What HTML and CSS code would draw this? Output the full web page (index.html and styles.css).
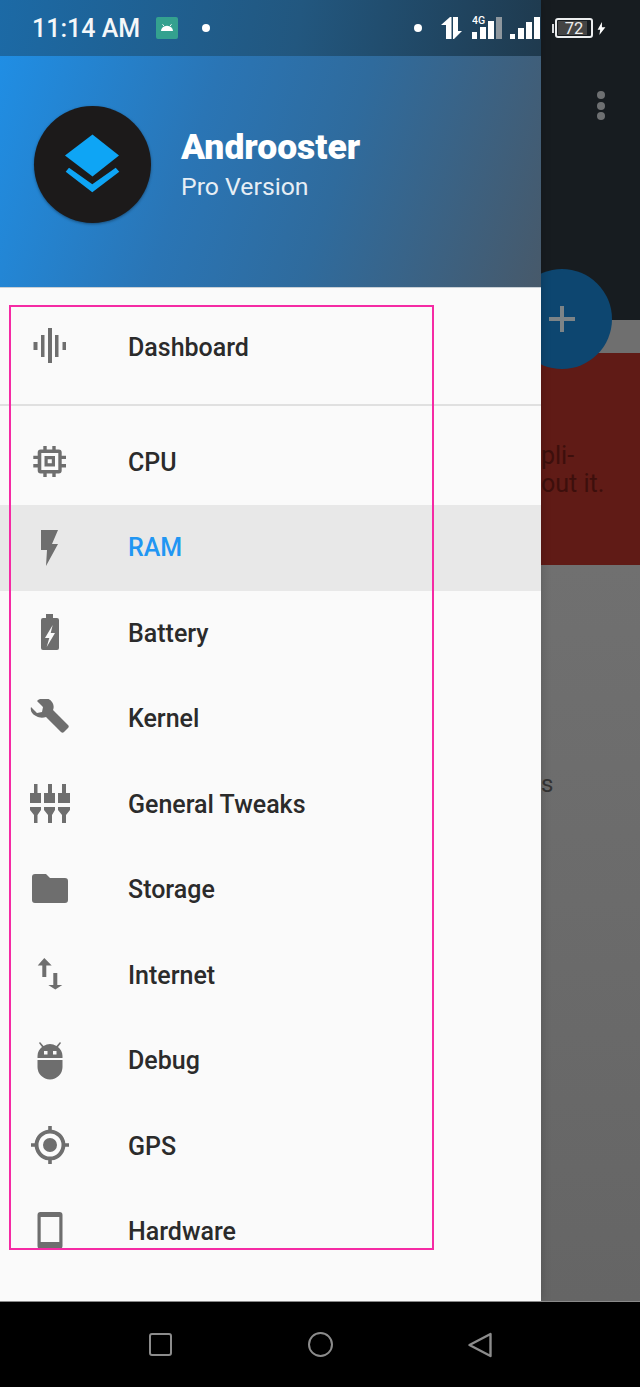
FILE: index.html
```html
<!DOCTYPE html>
<html lang="en">
<head>
  <meta charset="UTF-8">
  <title>Androoster</title>
  <link rel="stylesheet" href="styles.css">
</head>
<body>
  <div class="screen">
    <!-- App behind the drawer, dimmed by the scrim colours. -->
    <div class="backdrop">
      <div class="app-bar">
        <div class="overflow-menu"><span></span><span></span><span></span></div>
      </div>
      <div class="strip"></div>
      <div class="red-card">
        <p class="red-text">pli-<br>out it.</p>
      </div>
      <div class="grey-body">
        <p class="grey-text">s</p>
      </div>
    </div>

    <div class="fab"><span class="fab-plus"></span></div>

    <aside class="drawer">
      <header class="drawer-header">
        <div class="status-left">
          <span class="clock">11:14 AM</span>
          <span class="notif-badge">
            <svg viewBox="0 0 24 24" width="18" height="18"><path d="M4 16a8 7 0 0 1 16 0z" fill="#fff"/><path d="M8 9.500 6 7M16 9.500 18 7" stroke="#fff" stroke-width="1.200"/></svg>
          </span>
          <span class="status-dot"></span>
        </div>
        <div class="brand">
          <div class="logo">
            <svg viewBox="0 0 117 117" width="117" height="117">
              <path d="M58.500 28.500 85 49.500 58.500 70.500 31 49.500z" fill="#0ea5f5"/>
              <path d="M31.700 65.700 35 61.700 58.300 78.300 81.700 61.700 85.300 65.700 58.300 86.300z" fill="#0ea5f5"/>
            </svg>
          </div>
          <div class="brand-text">
            <div class="brand-name">Androoster</div>
            <div class="brand-sub">Pro Version</div>
          </div>
        </div>
      </header>

      <nav class="menu">
        <a class="menu-item menu-item-first">
          <svg class="menu-icon" viewBox="0 0 40 40"><path d="M3.500 15h4v8h-4zM11 8h3.500v22H11zM18 1h4v35h-4zM25 8h3.500v22H25zM32.500 15H36v8h-3.500z"/></svg>
          <span>Dashboard</span>
        </a>
        <div class="menu-divider"></div>
        <a class="menu-item">
          <svg class="menu-icon" viewBox="0 0 40 40"><path fill-rule="evenodd" d="M10.700 7.500h18a3 3 0 0 1 3 3v18a3 3 0 0 1-3 3h-18a3 3 0 0 1-3-3v-18a3 3 0 0 1 3-3zM11.300 11v17h17V11zM14.500 14H25v10.500H14.500zM17.700 17.200v4.100h4.100v-4.100zM13.300 4h3.400v3.500h-3.400zM22.300 4h3.400v3.500h-3.400zM13.300 31.500h3.400V35h-3.400zM22.300 31.500h3.400V35h-3.400zM3.300 13.700h4.400v3.400H3.300zM3.300 22h4.400v3.400H3.300zM31.700 13.700H36v3.400h-4.300zM31.700 22H36v3.400h-4.300z"/></svg>
          <span>CPU</span>
        </a>
        <a class="menu-item menu-item-active">
          <svg class="menu-icon" viewBox="0 0 40 40"><path d="M11 2h17l-6 14h6L16 38l1-16h-6z"/></svg>
          <span>RAM</span>
        </a>
        <a class="menu-item">
          <svg class="menu-icon" viewBox="0 0 40 40"><path fill-rule="evenodd" d="M16 1h7v4h4a2 2 0 0 1 2 2v28a2 2 0 0 1-2 2H13a2 2 0 0 1-2-2V7a2 2 0 0 1 2-2h3zM22.700 12 15 25h4.300l-2.600 9L25 20h-4.300z"/></svg>
          <span>Battery</span>
        </a>
        <a class="menu-item">
          <svg class="menu-icon" viewBox="0 0 40 40"><path d="M1 8 7 14l5-1 1-5-6-6C11-2 19-2 22 3c2 3 2 6 1 8l15 15c1 1 1 2 0 3l-4 4c-1 1-2 1-3 0L16 18c-3 1-7 1-10-1C2 15 0 12 1 8z"/></svg>
          <span>Kernel</span>
        </a>
        <a class="menu-item">
          <svg class="menu-icon" viewBox="0 0 40 40"><path d="M4 0h3.500v9H11v10H0V9h4zM18 0h4v9h3v10H14V9h4zM32 0h4v9h4v10H28V9h4zM0 23h11v3l-3.500 5v8H4v-8l-4-5zM14 23h11v3l-3 5v8h-4v-8l-4-5zM28 23h12v3l-4 5v8h-4v-8l-4-5z"/></svg>
          <span>General Tweaks</span>
        </a>
        <a class="menu-item">
          <svg class="menu-icon" viewBox="0 0 40 40"><path d="M5 4h11l4 4h15a3 3 0 0 1 3 3v19a3 3 0 0 1-3 3H5a3 3 0 0 1-3-3V7a3 3 0 0 1 3-3z"/></svg>
          <span>Storage</span>
        </a>
        <a class="menu-item">
          <svg class="menu-icon" viewBox="0 0 40 40"><path d="M14.300 3 21.700 10.500H16.300V22H12.300V10.500H7.700zM25.300 34.500 18.300 30H23.300V18H27.300V30H32.300z"/></svg>
          <span>Internet</span>
        </a>
        <a class="menu-item">
          <svg class="menu-icon" viewBox="0 0 40 40"><path fill-rule="evenodd" d="M7.500 17v-2c0-4 2-7 4.500-9L9 2l1-1 3.500 4a13 13 0 0 1 13 0L30 1l1 1-3 4c2.500 2 4.500 5 4.500 9v2zM14 10v3.500h3.500V10zM23 10v3.500h3.500V10zM7.500 19h25v7a12.500 12.500 0 0 1-25 0z"/></svg>
          <span>Debug</span>
        </a>
        <a class="menu-item">
          <svg class="menu-icon" viewBox="0 0 40 40"><path fill-rule="evenodd" d="M18.200 0h3.600v3.700A15.500 15.500 0 0 1 35.300 17.200H39v3.600h-3.700A15.500 15.500 0 0 1 21.800 34.300V38h-3.600v-3.700A15.500 15.500 0 0 1 4.700 20.800H1v-3.600h3.700A15.500 15.500 0 0 1 18.200 3.700zM20 7.500a11.500 11.500 0 1 0 0 23 11.500 11.500 0 0 0 0-23zM20 12a7 7 0 1 1 0 14 7 7 0 0 1 0-14z"/></svg>
          <span>GPS</span>
        </a>
        <a class="menu-item">
          <svg class="menu-icon" viewBox="0 0 40 40"><path fill-rule="evenodd" d="M10.500 0h19a3 3 0 0 1 3 3v31a3 3 0 0 1-3 3h-19a3 3 0 0 1-3-3V3a3 3 0 0 1 3-3zM10.700 5v25h18.600V5z"/></svg>
          <span>Hardware</span>
        </a>
      </nav>
      <div class="highlight-box"></div>
    </aside>

    <div class="status-right">
      <span class="status-dot status-dot-right"></span>
      <svg class="icon-arrows" width="21" height="24" viewBox="0 0 21 24"><path d="M9 1h1.500v22H5V9H0zM12 1h5v14h4l-8 8h-1z" fill="#fff"/></svg>
      <svg class="icon-signal" width="30" height="28" viewBox="0 0 30 28"><text x="0" y="10" class="net-type">4G</text><path d="M0 18h5v7H0zM8 13h6v12H8zM16 7h6v18h-6z" fill="#fff"/><path d="M24 3h6v22h-6z" fill="#8e979e"/></svg>
      <svg class="icon-signal-2" width="30" height="24" viewBox="0 0 30 24"><path d="M0 18h5v5H0zM8 12h6v11H8zM16 6h6v17h-6zM24 1h6v22h-6z" fill="#fff"/></svg>
      <span class="battery-cap"></span>
      <span class="battery"><span class="battery-fill"></span><span class="battery-num">72</span></span>
      <svg width="9" height="13" viewBox="0 0 9 15"><path d="M5 0 0 9h3l-1 6 7-9H5z" fill="#fff"/></svg>
    </div>

    <footer class="nav-bar">
      <span class="nav-square"></span>
      <span class="nav-circle"></span>
      <svg width="26" height="26" viewBox="0 0 26 26"><path d="M3.500 13 24.500 2v22z" fill="none" stroke="#8c8c8c" stroke-width="2.400" stroke-linejoin="round"/></svg>
    </footer>
  </div>
</body>
</html>
```
FILE: styles.css
```css
* {
  box-sizing: border-box;
}
body {
  margin: 0;
  font-family: Roboto, sans-serif;
}
p {
  margin: 0;
}

/**
 * Screen.
 */
.screen {
  position: relative;
  display: flex;
  flex-direction: column;
  width: 640px;
  height: 1387px;
  overflow: hidden;
  background: #000;
}

/**
 * App behind the drawer.
 */
.backdrop {
  display: flex;
  flex-direction: column;
  align-items: flex-end;
  height: 1301px;
}
.app-bar {
  width: 100%;
  height: 320px;
  padding: 91px 35px 0 0;
  background: #171c20;
}
.overflow-menu {
  display: flex;
  flex-direction: column;
  align-items: flex-end;
  gap: 2.500px;
}
.overflow-menu span {
  width: 8px;
  height: 8px;
  border-radius: 50%;
  background: #6e7072;
}
.strip {
  width: 100%;
  height: 33px;
  background: #6f6f6f;
}
.red-card {
  width: 100%;
  height: 212px;
  padding: 89px 0 0 541px;
  background: #601b16;
}
.red-text {
  color: #3d0f0c;
  font-size: 25px;
  line-height: 28px;
}
.grey-body {
  flex: 1;
  width: 100%;
  padding: 205px 0 0 541px;
  background: linear-gradient(#707070, #656565);
}
.grey-text {
  color: #333;
  font-size: 24px;
  line-height: 29px;
}
.fab {
  position: absolute;
  top: 269px;
  left: 512px;
  display: flex;
  align-items: center;
  justify-content: center;
  width: 100px;
  height: 100px;
  border-radius: 50%;
  background: #0d4670;
}
.fab-plus {
  position: relative;
  width: 26px;
  height: 4px;
  background: #7d8487;
}
.fab-plus::after {
  content: "";
  position: absolute;
  top: -11px;
  left: 11px;
  width: 4px;
  height: 26px;
  background: #7d8487;
}

/**
 * Drawer.
 */
.drawer {
  position: absolute;
  top: 0;
  left: 0;
  display: flex;
  flex-direction: column;
  width: 541px;
  height: 1301px;
  background: #fafafa;
  box-shadow: 0 0 10px rgba(0, 0, 0, 0.2);
}
.drawer-header {
  height: 288px;
  background: linear-gradient(108deg, #1f90e8 0%, #2a75b5 38%, #2f6b9d 62%, #47596a 100%);
  border-bottom: 1px solid #c9d0d6;
}
.status-left {
  display: flex;
  align-items: center;
  height: 56px;
  padding-left: 32px;
  background: linear-gradient(100deg, #1c6aa6 0%, #22577f 55%, #1f3a4e 100%);
}
.clock {
  width: 124px;
  color: #f4f7f9;
  font-size: 25px;
  font-weight: 500;
}
.notif-badge {
  display: flex;
  align-items: center;
  justify-content: center;
  width: 22px;
  height: 22px;
  margin-right: 24px;
  border-radius: 2px;
  background: #34a18f;
}
.status-dot {
  width: 8px;
  height: 8px;
  border-radius: 50%;
  background: #fff;
}
.brand {
  display: flex;
  align-items: center;
  padding: 50px 0 0 34px;
}
.logo {
  width: 117px;
  height: 117px;
  margin-right: 30px;
  border-radius: 50%;
  background: #1c1a1a;
  box-shadow: 0 1px 3px rgba(0, 0, 0, 0.4);
}
.brand-name {
  color: #fff;
  font-size: 35.500px;
  font-weight: 900;
  line-height: 44px;
}
.brand-sub {
  color: #e6eef5;
  font-size: 24.800px;
  line-height: 36px;
}

/**
 * Menu rows.
 */
.menu {
  height: 1012px;
  overflow: hidden;
}
.menu-item {
  display: flex;
  align-items: center;
  height: 85.500px;
  padding-left: 30px;
  color: #2b2b2b;
  font-size: 25px;
  font-weight: 500;
}
.menu-item-first {
  height: 116px;
  padding-top: 2px;
}
.menu-item-active {
  color: #2196f3;
  background: #e8e8e8;
}
.menu-icon {
  flex: none;
  width: 40px;
  height: 40px;
  margin-right: 58px;
  fill: #6e6e6e;
}
.menu-divider {
  height: 2px;
  margin-bottom: 13.500px;
  background: #e0e0e0;
}
.highlight-box {
  position: absolute;
  top: 305px;
  left: 9px;
  width: 425px;
  height: 945px;
  border: 2px solid #f52aa4;
}

/**
 * Status bar, right side (spans drawer and app).
 */
.status-right {
  position: absolute;
  top: 0;
  left: 414px;
  display: flex;
  align-items: center;
  height: 56px;
}
.status-dot-right {
  margin-right: 19px;
}
.icon-arrows {
  margin-right: 10px;
}
.icon-signal {
  margin-right: 8px;
}
.icon-signal-2 {
  margin-right: 12px;
}
.net-type {
  fill: #fff;
  font-family: Roboto, sans-serif;
  font-size: 10.500px;
  font-weight: 500;
}
.battery-cap {
  width: 2px;
  height: 9px;
  margin-right: 1px;
  background: #d9dbdd;
}
.battery {
  position: relative;
  display: flex;
  align-items: center;
  justify-content: center;
  width: 38px;
  height: 20px;
  margin-right: 4px;
  border: 2px solid #eceeef;
  border-radius: 3px;
}
.battery-fill {
  position: absolute;
  top: 1px;
  bottom: 1px;
  left: 1px;
  width: 85%;
  background: #444;
}
.battery-num {
  position: relative;
  color: #eee;
  font-size: 16.500px;
}

/**
 * Navigation bar.
 */
.nav-bar {
  position: absolute;
  top: 1301px;
  left: 0;
  display: flex;
  justify-content: space-between;
  align-items: center;
  width: 640px;
  height: 86px;
  padding: 0 148px 0 149px;
  background: #000;
  border-top: 1px solid #8a8a8a;
}
.nav-square {
  width: 23px;
  height: 23px;
  border: 2.500px solid #8c8c8c;
  border-radius: 3px;
}
.nav-circle {
  width: 25px;
  height: 25px;
  margin-left: 3px;
  border: 2.500px solid #8c8c8c;
  border-radius: 50%;
}
```
